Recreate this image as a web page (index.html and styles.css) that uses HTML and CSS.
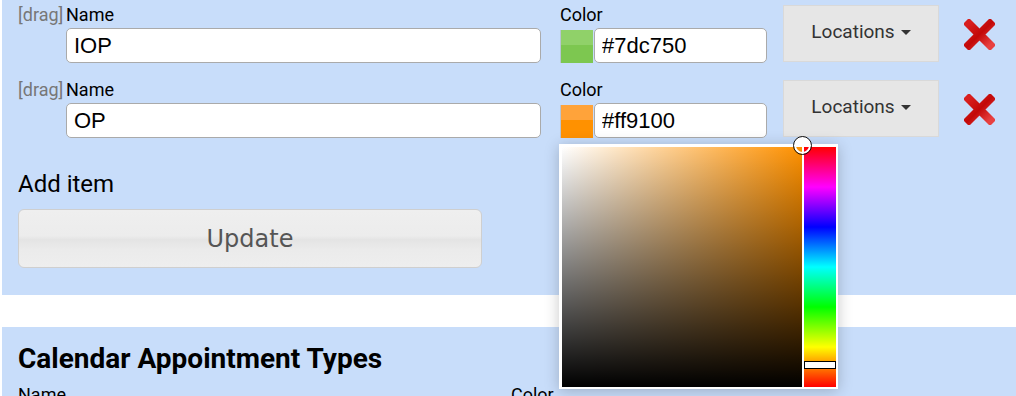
FILE: index.html
```html
<!DOCTYPE html>
<html>
<head>
<meta charset="utf-8">
<link rel="stylesheet" href="styles.css">
</head>
<body>
<div class="panel">
  <div class="item">
    <span class="drag">[drag]</span>
    <div class="field name-field">
      <div class="lbl">Name</div>
      <input class="txt" type="text" value="IOP">
    </div>
    <div class="field color-field">
      <div class="lbl">Color</div>
      <div class="color-row">
        <span class="swatch green"></span>
        <input class="txt hex" type="text" value="#7dc750">
      </div>
    </div>
    <button class="loc">Locations<span class="caret"></span></button>
    <span class="del">
      <svg width="31" height="31" viewBox="0 0 31 31">
        <defs>
          <linearGradient id="xg1" x1="0" y1="0" x2="1" y2="1">
            <stop offset="0" stop-color="#d81e1e"/>
            <stop offset="0.5" stop-color="#c20808"/>
            <stop offset="1" stop-color="#e84040"/>
          </linearGradient>
        </defs>
        <path d="M5 5 L26 26 M26 5 L5 26" stroke="url(#xg1)" stroke-width="8.5" stroke-linecap="square" fill="none"/>
      </svg>
    </span>
  </div>
  <div class="item">
    <span class="drag">[drag]</span>
    <div class="field name-field">
      <div class="lbl">Name</div>
      <input class="txt" type="text" value="OP">
    </div>
    <div class="field color-field">
      <div class="lbl">Color</div>
      <div class="color-row">
        <span class="swatch orange"></span>
        <input class="txt hex" type="text" value="#ff9100">
      </div>
      <div class="picker">
        <div class="sv"></div>
        <div class="hue"></div>
        <span class="sv-handle"></span>
        <span class="hue-handle"></span>
      </div>
    </div>
    <button class="loc">Locations<span class="caret"></span></button>
    <span class="del">
      <svg width="31" height="31" viewBox="0 0 31 31">
        <defs>
          <linearGradient id="xg2" x1="0" y1="0" x2="1" y2="1">
            <stop offset="0" stop-color="#d81e1e"/>
            <stop offset="0.5" stop-color="#c20808"/>
            <stop offset="1" stop-color="#e84040"/>
          </linearGradient>
        </defs>
        <path d="M5 5 L26 26 M26 5 L5 26" stroke="url(#xg2)" stroke-width="8.5" stroke-linecap="square" fill="none"/>
      </svg>
    </span>
  </div>
  <div class="add">Add item</div>
  <button class="update">Update</button>
</div>
<div class="panel panel2">
  <h2 class="title">Calendar Appointment Types</h2>
  <div class="head-row">
    <span class="lbl col-name">Name</span>
    <span class="lbl">Color</span>
  </div>
</div>
</body>
</html>
```
FILE: styles.css
```css
html, body {
  margin: 0;
  padding: 0;
  background: #ffffff;
  overflow: hidden;
}
body {
  width: 1016px;
  height: 396px;
  font-family: Roboto, "Liberation Sans", sans-serif;
}
.panel {
  margin-left: 2px;
  background: #c8ddfa;
  padding: 4px 0 27px 16px;
}
.item {
  display: flex;
  align-items: flex-start;
  margin-bottom: 16px;
}
.item > * {
  flex: none;
}
.drag {
  width: 48px;
  font-size: 18px;
  line-height: 21px;
  color: #777;
}
.lbl {
  font-size: 18px;
  line-height: 21px;
  color: #000;
}
.field .lbl {
  margin-bottom: 3px;
}
.name-field {
  width: 475px;
}
.txt {
  display: block;
  box-sizing: border-box;
  width: 100%;
  height: 35px;
  margin: 0;
  border: 1px solid #aaa;
  border-radius: 5px;
  background: #fff;
  padding: 0 7px;
  font-family: "Liberation Sans", Arial, sans-serif;
  font-size: 22px;
  color: #000;
  outline: none;
}
.color-field {
  position: relative;
  width: 207px;
  margin-left: 19px;
}
.color-row {
  display: flex;
  align-items: flex-start;
  gap: 1px;
}
.swatch {
  flex: none;
  width: 33px;
  height: 33px;
  margin-top: 2px;
  box-sizing: border-box;
  border-left: 1px solid #b8c4d4;
}
.swatch.green {
  background: linear-gradient(#90d169 0, #90d169 45%, #7dc750 45%, #7dc750 100%);
}
.swatch.orange {
  background: linear-gradient(#ffa33a 0, #ffa33a 45%, #ff9100 45%, #ff9100 100%);
}
.hex {
  flex: 1 1 0;
  min-width: 0;
  width: 0;
}
.loc {
  box-sizing: border-box;
  width: 156px;
  height: 57px;
  margin: 1px 0 0 16px;
  background: #e6e6e6;
  border: 1px solid #d9d9d9;
  border-radius: 0;
  font-family: Roboto, "Liberation Sans", sans-serif;
  font-size: 19px;
  color: #333;
  display: flex;
  align-items: center;
  justify-content: center;
  padding: 0 0 4px 0;
  white-space: nowrap;
}
.caret {
  display: inline-block;
  width: 0;
  height: 0;
  margin-left: 6px;
  margin-top: 2px;
  border-left: 5px solid transparent;
  border-right: 5px solid transparent;
  border-top: 5px solid #333;
}
.del {
  display: block;
  width: 31px;
  height: 31px;
  margin: 15px 0 0 25px;
}
.del svg {
  display: block;
}
.picker {
  position: absolute;
  left: -1px;
  top: 65px;
  width: 279px;
  height: 245px;
  box-sizing: border-box;
  background: #fff;
  padding: 3px 2px 2px 3px;
  display: flex;
  gap: 2px;
  box-shadow: 0 2px 14px rgba(0, 0, 0, 0.22);
  z-index: 5;
}
.sv {
  width: 240px;
  height: 240px;
  background:
    linear-gradient(to top, #000 0%, rgba(0, 0, 0, 0) 100%),
    linear-gradient(to right, #fff 0%, #ff9100 100%);
}
.hue {
  width: 32px;
  height: 240px;
  background: linear-gradient(to bottom,
    #ff0000 0%, #ff00ff 16.67%, #0000ff 33.33%, #00ffff 50%,
    #00ff00 66.67%, #ffff00 83.33%, #ff0000 100%);
}
.sv-handle {
  position: absolute;
  left: 234px;
  top: -8px;
  width: 19px;
  height: 19px;
  box-sizing: border-box;
  border-radius: 50%;
  border: 1.5px solid #111;
  box-shadow: inset 0 0 0 2px #fff;
  background: linear-gradient(#fff 0, #fff 50%, rgba(255,255,255,0) 50%);
}
.hue-handle {
  position: absolute;
  left: 245px;
  top: 217px;
  width: 32px;
  height: 8px;
  box-sizing: border-box;
  border: 1.5px solid #000;
  background: #fff;
}
.add {
  margin-top: 32px;
  font-size: 24px;
  line-height: 28px;
  color: #000;
}
.update {
  display: block;
  box-sizing: border-box;
  width: 464px;
  height: 59px;
  margin: 11px 0 0 0;
  border: 1px solid #cfcfcf;
  border-radius: 6px;
  background: linear-gradient(#efefef 0%, #ececec 45%, #e4e4e4 52%, #ebebeb 70%, #eeeeee 100%);
  font-family: "DejaVu Sans", Verdana, sans-serif;
  font-size: 24px;
  color: #555;
  padding: 0;
}
.panel2 {
  margin-top: 32px;
  padding: 16px 0 20px 16px;
}
.title {
  margin: 0;
  font-size: 28px;
  line-height: 32px;
  font-weight: 700;
  color: #000;
}
.head-row {
  display: flex;
  margin-top: 9px;
}
.col-name {
  width: 493px;
}
```
